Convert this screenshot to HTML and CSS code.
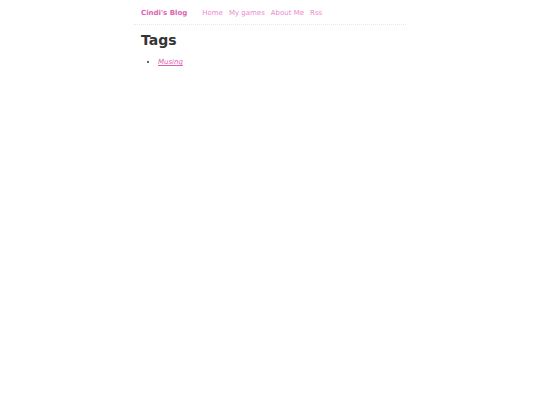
FILE: index.html
```html
<!DOCTYPE html>
<html>
<head>
<meta charset="utf-8">
<link rel="stylesheet" href="styles.css">
</head>
<body>
<div class="wrap">
  <header class="topbar">
    <a class="brand" href="#">Cindi's Blog</a>
    <nav class="nav">
      <a href="#">Home</a>
      <a href="#">My games</a>
      <a href="#">About Me</a>
      <a href="#">Rss</a>
    </nav>
  </header>
  <main class="content">
    <h1 class="title">Tags</h1>
    <ul class="tags">
      <li><a href="#">Musing</a></li>
    </ul>
  </main>
</div>
</body>
</html>
```
FILE: styles.css
```css
html, body {
  margin: 0;
  padding: 0;
  background: #fff;
}
body {
  font-family: "DejaVu Sans", sans-serif;
  font-size: 7px;
  color: #333;
}
.wrap {
  width: 272px;
  margin: 0 auto;
}
.topbar {
  display: flex;
  align-items: center;
  height: 22px;
  padding: 2px 7px 0;
  border-bottom: 1px dotted #e8e8e8;
}
.brand {
  font-weight: bold;
  color: #e060b0;
  text-decoration: none;
  margin-right: 15px;
}
.nav {
  display: flex;
  gap: 6px;
}
.nav a {
  color: #ee88cc;
  text-decoration: none;
}
.content {
  padding: 0 7px;
}
.title {
  font-size: 14px;
  margin: 7px 0 10px;
  color: #333;
}
.tags {
  margin: 0;
  padding-left: 17px;
}
.tags a {
  color: #e060b0;
  font-style: italic;
}
```
